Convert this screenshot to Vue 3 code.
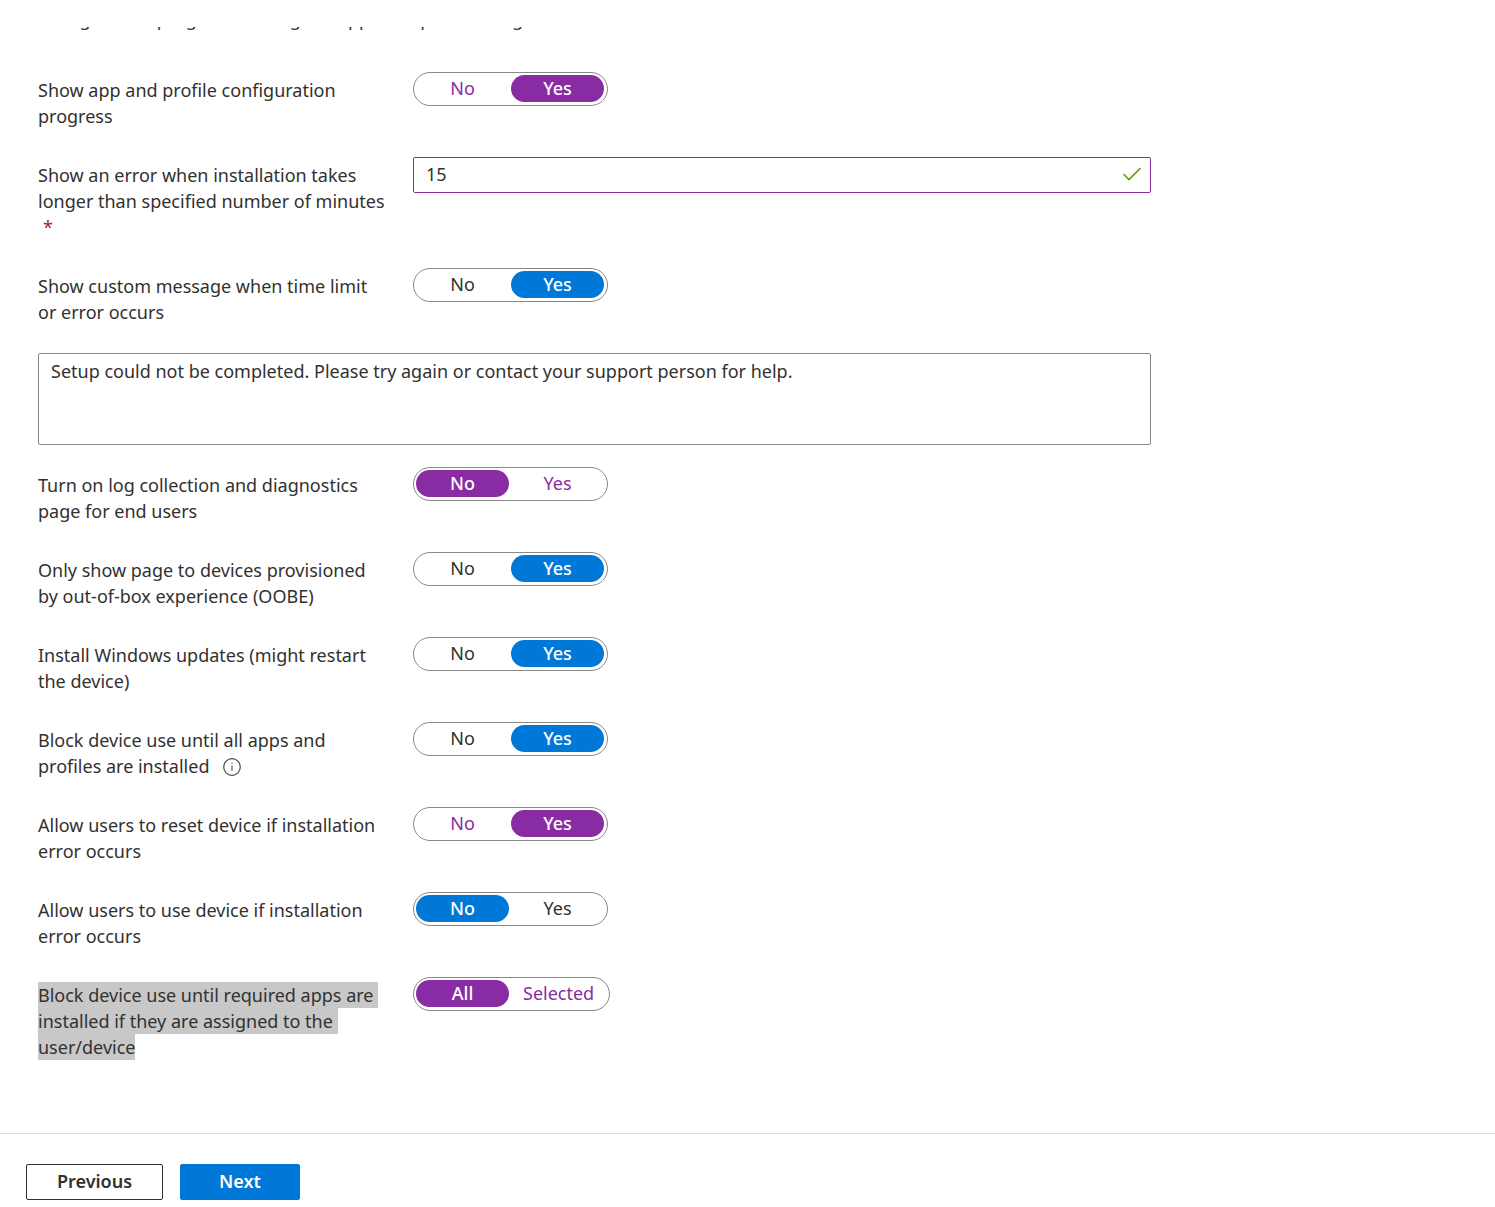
<script setup>
import { reactive, ref } from 'vue'

const rows = reactive([
  { id: 'progress', label: 'Show app and profile configuration progress', options: ['No', 'Yes'], value: 'Yes', tone: 'purple' },
  { id: 'timeout', label: 'Show an error when installation takes longer than specified number of minutes', type: 'number', required: true },
  { id: 'custom', label: 'Show custom message when time limit or error occurs', options: ['No', 'Yes'], value: 'Yes', tone: 'blue' },
  { id: 'message', label: 'Custom message', type: 'message' },
  { id: 'logs', label: 'Turn on log collection and diagnostics page for end users', options: ['No', 'Yes'], value: 'No', tone: 'purple' },
  { id: 'oobe', label: 'Only show page to devices provisioned by out-of-box experience (OOBE)', options: ['No', 'Yes'], value: 'Yes', tone: 'blue' },
  { id: 'updates', label: 'Install Windows updates (might restart the device)', options: ['No', 'Yes'], value: 'Yes', tone: 'blue' },
  { id: 'block', label: 'Block device use until all apps and profiles are installed', options: ['No', 'Yes'], value: 'Yes', tone: 'blue', info: true },
  { id: 'reset', label: 'Allow users to reset device if installation error occurs', options: ['No', 'Yes'], value: 'Yes', tone: 'purple' },
  { id: 'use', label: 'Allow users to use device if installation error occurs', options: ['No', 'Yes'], value: 'No', tone: 'blue' },
  {
    id: 'required',
    lines: ['Block device use until required apps are', 'installed if they are assigned to the', 'user/device'],
    options: ['All', 'Selected'],
    value: 'All',
    tone: 'purple',
  },
])
const minutes = ref('15')
const message = ref('Setup could not be completed. Please try again or contact your support person for help.')
</script>

<template>
  <div class="page">
    <main class="pane">
      <p class="intro">configuration progress of assigned apps and profiles targeted to their device.</p>
      <form class="settings" @submit.prevent>
        <template v-for="row in rows" :key="row.id">
          <textarea
            v-if="row.type === 'message'"
            v-model="message"
            class="message"
            :aria-label="row.label"
          ></textarea>
          <div v-else-if="row.type === 'number'" class="row">
            <label class="label" :for="row.id">{{ row.label }} <span class="star">*</span></label>
            <div class="field">
              <input :id="row.id" v-model="minutes" class="box" type="text" required />
              <svg class="check" viewBox="0 0 20 16" width="20" height="16" aria-hidden="true">
                <path d="M1.500 8 L7 13.500 L18.500 2" fill="none" stroke="#57a300" stroke-width="1.600" />
              </svg>
            </div>
          </div>
          <div v-else class="row">
            <div :id="row.id" class="label">
              <template v-if="row.lines">
                <span v-for="line in row.lines" :key="line" class="selected-line">{{ line }}</span>
              </template>
              <template v-else>{{ row.label }}</template>
              <svg v-if="row.info" class="info" viewBox="0 0 18 18" width="18" height="18" aria-hidden="true">
                <circle cx="9" cy="9" r="8.300" fill="none" stroke="#4a4948" stroke-width="1.200" />
                <path d="M9 7.500V13" stroke="#605e5c" stroke-width="1.200" />
                <circle cx="9" cy="5.200" r="0.800" fill="#605e5c" />
              </svg>
            </div>
            <div class="toggle" :class="row.tone" role="radiogroup" :aria-labelledby="row.id">
              <label v-for="option in row.options" :key="option" class="option" :class="{ on: row.value === option }">
                <input v-model="row.value" type="radio" :name="'opt-' + row.id" :value="option" />
                {{ option }}
              </label>
            </div>
          </div>
        </template>
      </form>
    </main>
    <footer class="footer">
      <button type="button" class="button previous">Previous</button>
      <button type="button" class="button next">Next</button>
    </footer>
  </div>
</template>

<style>
body {
  margin: 0;
  background: #fff;
}
</style>

<style scoped>
.page {
  font-family: "Noto Sans", "Open Sans", sans-serif;
  font-size: 18px;
  line-height: 26px;
  color: #323130;
  padding-top: 27px;
}
.pane {
  overflow: hidden;
  padding: 0 38px 73px;
}
.intro {
  margin: -21px 0 40px;
}
.settings {
  display: flex;
  flex-direction: column;
  gap: 28px;
  max-width: 1113px;
}
.row {
  display: grid;
  grid-template-columns: 351px minmax(0, 1fr);
  column-gap: 24px;
  align-items: start;
}
.label {
  padding-top: 5px;
}
.star {
  color: #a4262c;
  margin-left: 5px;
}
.selected-line {
  display: block;
  width: fit-content;
  padding-right: 5px;
  white-space: nowrap;
  background: #c8c8c8;
}
.selected-line:last-of-type {
  padding-right: 0;
}
.info {
  margin-left: 14px;
  vertical-align: -3px;
}
.toggle {
  display: flex;
  gap: 2px;
  width: fit-content;
  box-sizing: border-box;
  height: 34px;
  padding: 2px 3px 3px 2px;
  border: 1px solid #8a8886;
  border-radius: 17px;
}
.option {
  position: relative;
  box-sizing: border-box;
  min-width: 93px;
  height: 27px;
  padding: 0 12px;
  border-radius: 14px;
  line-height: 27px;
  text-align: center;
  cursor: pointer;
}
.option input {
  position: absolute;
  inset: 0;
  margin: 0;
  appearance: none;
  cursor: pointer;
}
.option.on {
  color: #fff;
  font-weight: 500;
}
.purple .option:not(.on) {
  color: #892ba3;
}
.purple .on {
  background: #892ba3;
}
.blue .on {
  background: #0078d7;
}
.field {
  position: relative;
}
.box,
.message {
  display: block;
  box-sizing: border-box;
  width: 100%;
  font: inherit;
  color: inherit;
  background: #fff;
  border-radius: 2px;
  outline: none;
}
.box {
  height: 36px;
  padding: 0 44px 2px 12px;
  border: 1px solid #892ba3;
}
.check {
  position: absolute;
  right: 9px;
  top: 9px;
}
.message {
  height: 92px;
  margin-bottom: -6px;
  padding: 4px 12px;
  border: 1px solid #8a8886;
  resize: none;
}
.footer {
  display: flex;
  gap: 17px;
  padding: 30px 26px 7px;
  border-top: 1px solid #dcdcdc;
}
.button {
  box-sizing: border-box;
  height: 36px;
  padding: 0 0 2px;
  border: 1px solid #323130;
  border-radius: 2px;
  background: #fff;
  color: #323130;
  font: inherit;
  font-weight: 600;
}
.previous {
  width: 137px;
}
.next {
  width: 120px;
  border-color: #0078d7;
  background: #0078d7;
  color: #fff;
}
</style>
